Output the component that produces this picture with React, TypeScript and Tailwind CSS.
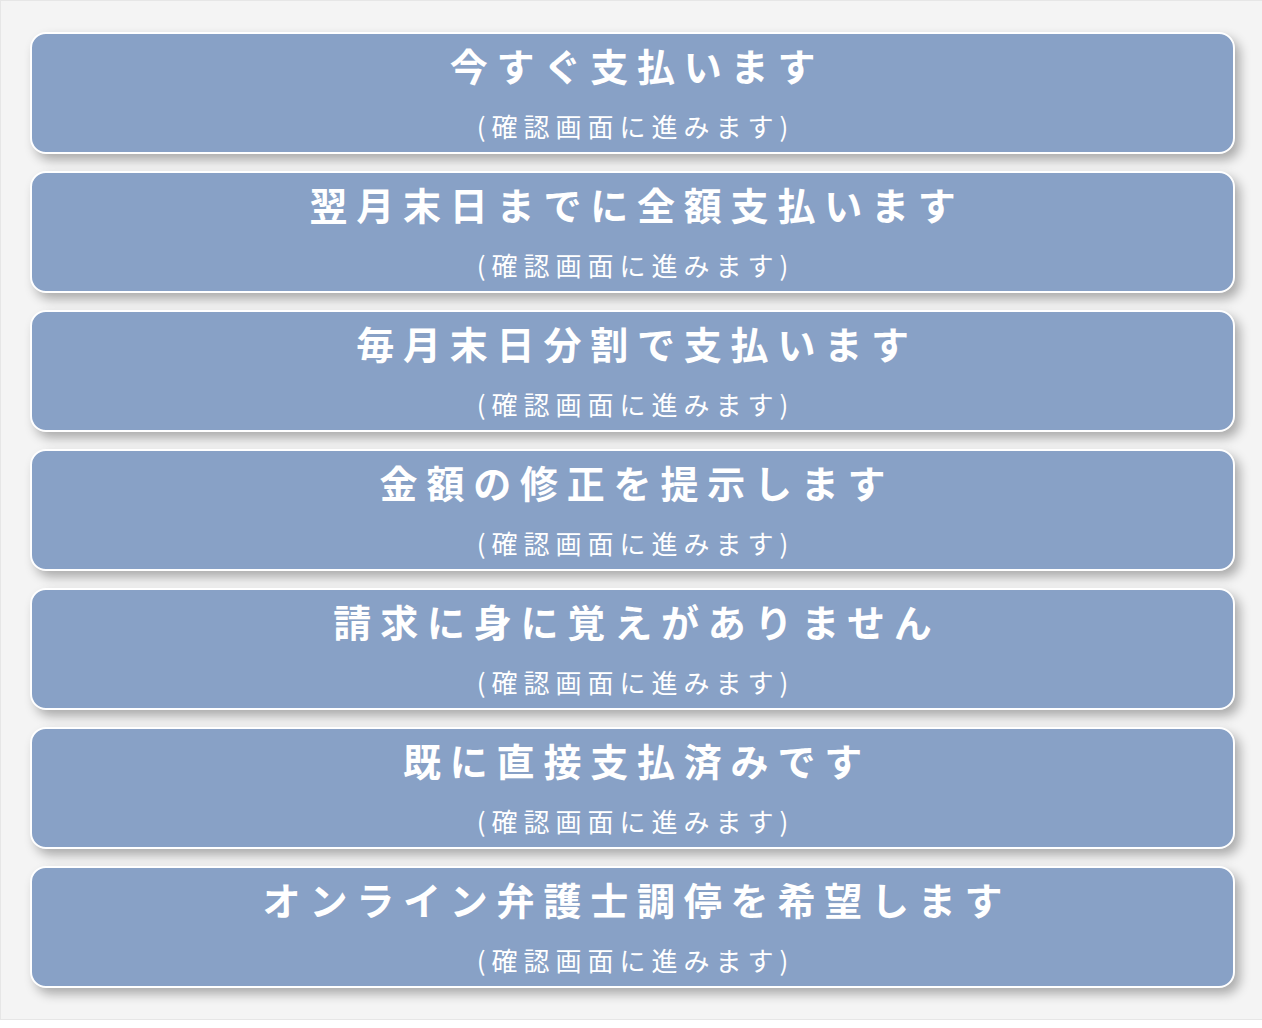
import React from "react";

const options = [
  "今すぐ支払います",
  "翌月末日までに全額支払います",
  "毎月末日分割で支払います",
  "金額の修正を提示します",
  "請求に身に覚えがありません",
  "既に直接支払済みです",
  "オンライン弁護士調停を希望します",
];

function ChoiceButton({ label }: { label: string }) {
  return (
    <button
      type="button"
      className="flex h-[122px] w-[1205px] flex-col items-center rounded-[16px] border-2 border-white bg-[#88a1c6] text-white shadow-[5px_6px_11px_rgba(0,0,0,0.3)]"
    >
      <span className="mt-[9px] block pl-[9px] text-[38px] font-bold leading-[44px] tracking-[8.8px]">
        {label}
      </span>
      <span className="mt-[24px] block pl-[6px] text-[26px] font-normal leading-[30px] tracking-[6px]">
        (確認画面に進みます)
      </span>
    </button>
  );
}

export default function App() {
  return (
    <div
      className="min-h-[1028px] w-[1262px] bg-white"
      style={{ fontFamily: '"Noto Sans CJK JP", "Noto Sans", sans-serif' }}
    >
      <div className="flex h-[1020px] w-[1290px] flex-col gap-[17px] border border-[#e6e6e6] bg-[#f4f4f4] pl-[29px] pt-[31px]">
        {options.map((o) => (
          <ChoiceButton key={o} label={o} />
        ))}
      </div>
    </div>
  );
}
